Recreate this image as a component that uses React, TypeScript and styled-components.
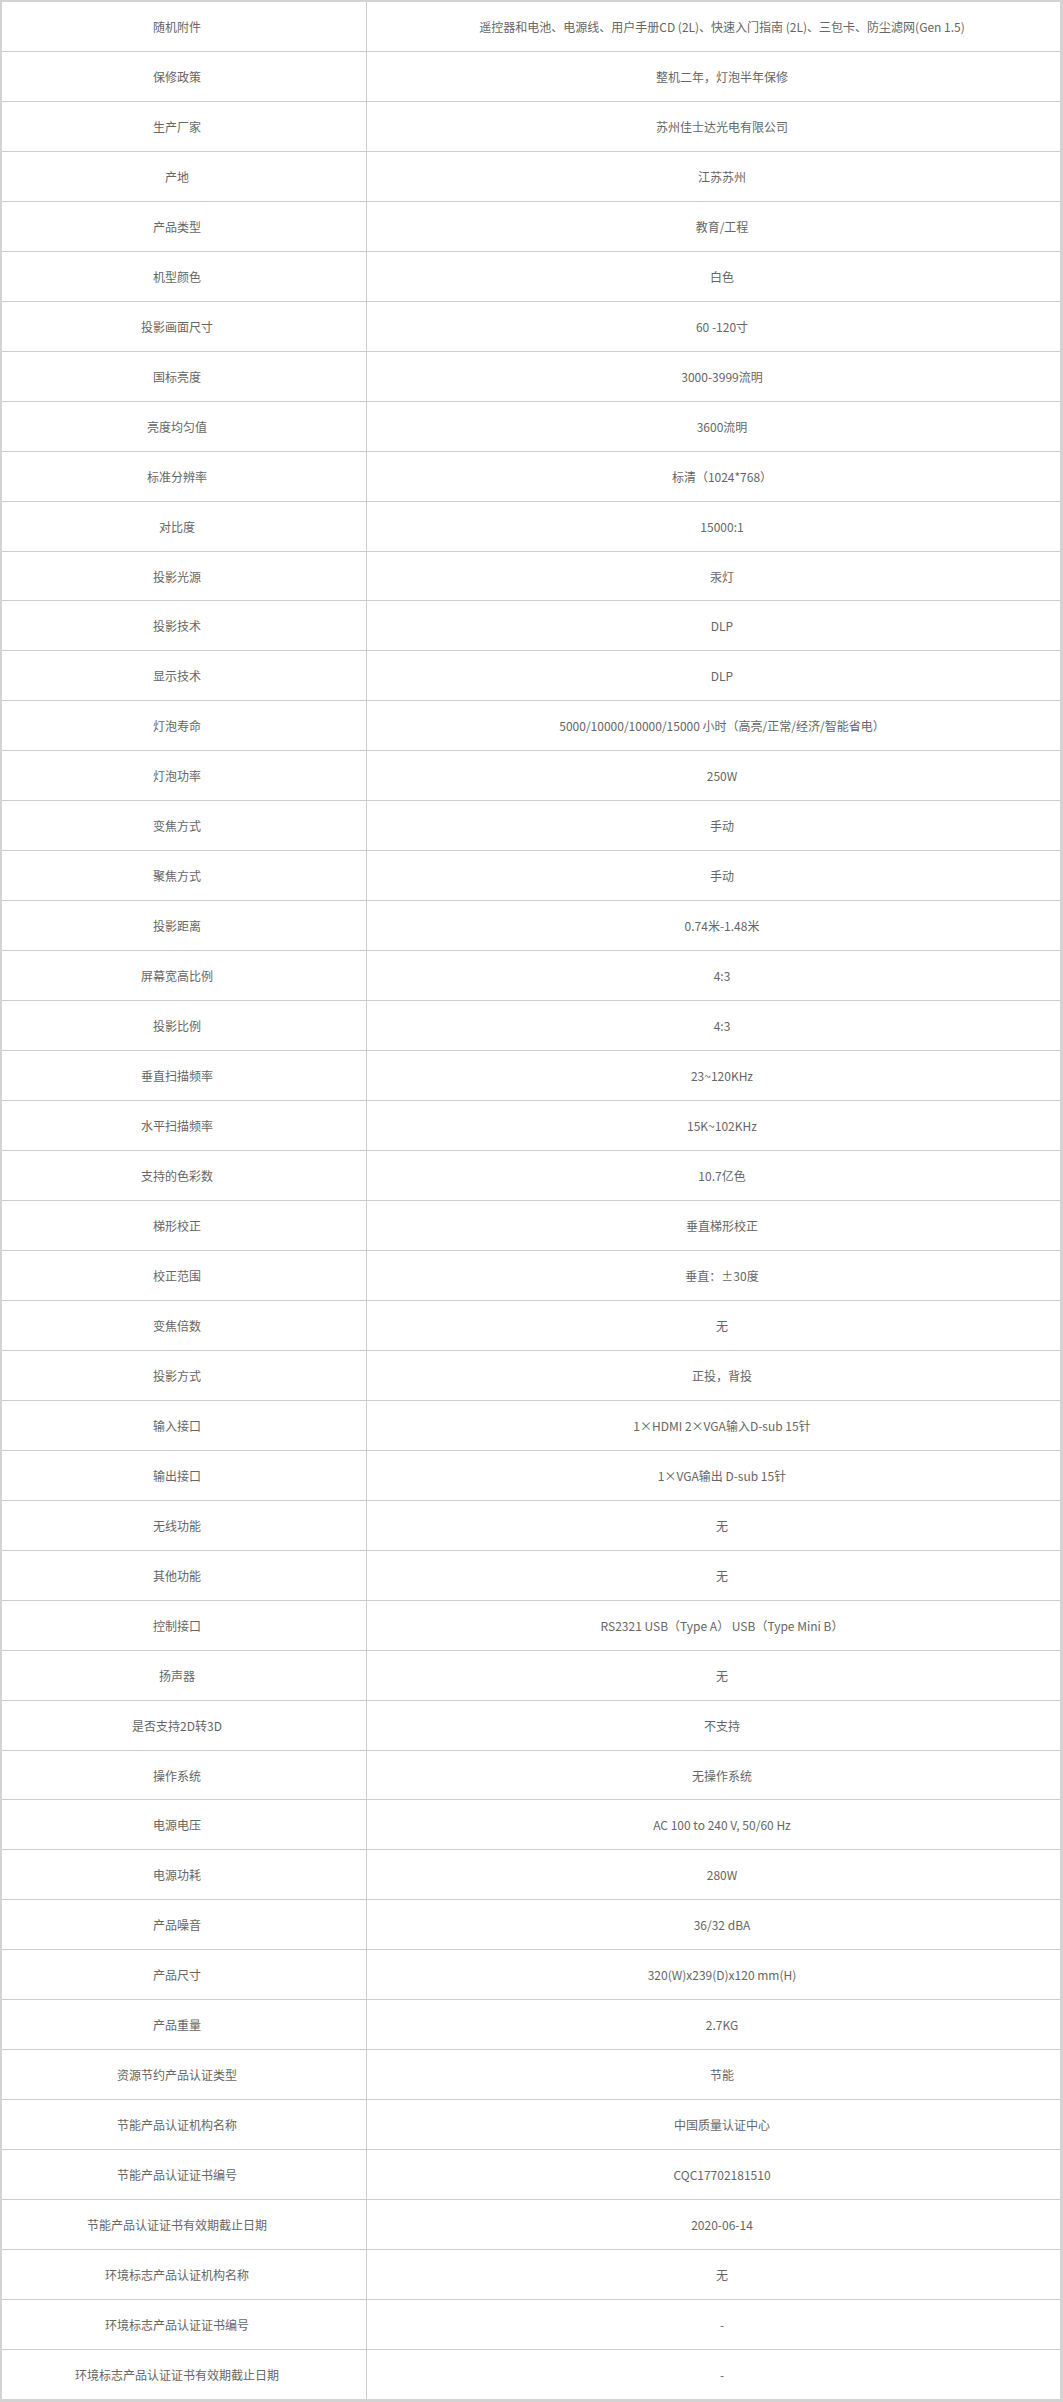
import React from "react";
import styled, { createGlobalStyle } from "styled-components";

const Global = createGlobalStyle`
  html, body { margin: 0; padding: 0; background: #fff; }
  * { box-sizing: border-box; }
`;

const Table = styled.div`
  width: 1063px;
  height: 2402px;
  border-style: solid;
  border-color: #d3d3d3;
  border-width: 2px 3px 3px 2px;
  background: #cccccc;
  display: grid;
  grid-template-columns: 364px 1fr;
  grid-template-rows: repeat(48, 1fr);
  gap: 1px;
  font-family: "Noto Sans CJK SC", "Open Sans", sans-serif;
  font-size: 12px;
  color: #666;
`;

const Cell = styled.div<{ $side: "label" | "value" }>`
  background: #fff;
  display: flex;
  align-items: center;
  justify-content: center;
  text-align: center;
  white-space: nowrap;
  padding: ${(p) => (p.$side === "label" ? "0 14px 0 0" : "0 0 0 17px")};
`;

const rows: [string, string][] = [
  ["随机附件", "遥控器和电池、电源线、用户手册CD (2L)、快速入门指南 (2L)、三包卡、防尘滤网(Gen 1.5)"],
  ["保修政策", "整机二年，灯泡半年保修"],
  ["生产厂家", "苏州佳士达光电有限公司"],
  ["产地", "江苏苏州"],
  ["产品类型", "教育/工程"],
  ["机型颜色", "白色"],
  ["投影画面尺寸", "60 -120寸"],
  ["国标亮度", "3000-3999流明"],
  ["亮度均匀值", "3600流明"],
  ["标准分辨率", "标清（1024*768）"],
  ["对比度", "15000:1"],
  ["投影光源", "汞灯"],
  ["投影技术", "DLP"],
  ["显示技术", "DLP"],
  ["灯泡寿命", "5000/10000/10000/15000 小时（高亮/正常/经济/智能省电）"],
  ["灯泡功率", "250W"],
  ["变焦方式", "手动"],
  ["聚焦方式", "手动"],
  ["投影距离", "0.74米-1.48米"],
  ["屏幕宽高比例", "4:3"],
  ["投影比例", "4:3"],
  ["垂直扫描频率", "23~120KHz"],
  ["水平扫描频率", "15K~102KHz"],
  ["支持的色彩数", "10.7亿色"],
  ["梯形校正", "垂直梯形校正"],
  ["校正范围", "垂直：±30度"],
  ["变焦倍数", "无"],
  ["投影方式", "正投，背投"],
  ["输入接口", "1×HDMI 2×VGA输入D-sub 15针"],
  ["输出接口", "1×VGA输出 D-sub 15针"],
  ["无线功能", "无"],
  ["其他功能", "无"],
  ["控制接口", "RS2321 USB（Type A） USB（Type Mini B）"],
  ["扬声器", "无"],
  ["是否支持2D转3D", "不支持"],
  ["操作系统", "无操作系统"],
  ["电源电压", "AC 100 to 240 V, 50/60 Hz"],
  ["电源功耗", "280W"],
  ["产品噪音", "36/32 dBA"],
  ["产品尺寸", "320(W)x239(D)x120 mm(H)"],
  ["产品重量", "2.7KG"],
  ["资源节约产品认证类型", "节能"],
  ["节能产品认证机构名称", "中国质量认证中心"],
  ["节能产品认证证书编号", "CQC17702181510"],
  ["节能产品认证证书有效期截止日期", "2020-06-14"],
  ["环境标志产品认证机构名称", "无"],
  ["环境标志产品认证证书编号", "-"],
  ["环境标志产品认证证书有效期截止日期", "-"],
];

export default function App() {
  return (
    <>
      <Global />
      <Table>
        {rows.map(([k, v], i) => (
          <React.Fragment key={i}>
            <Cell $side="label">{k}</Cell>
            <Cell $side="value">{v}</Cell>
          </React.Fragment>
        ))}
      </Table>
    </>
  );
}
